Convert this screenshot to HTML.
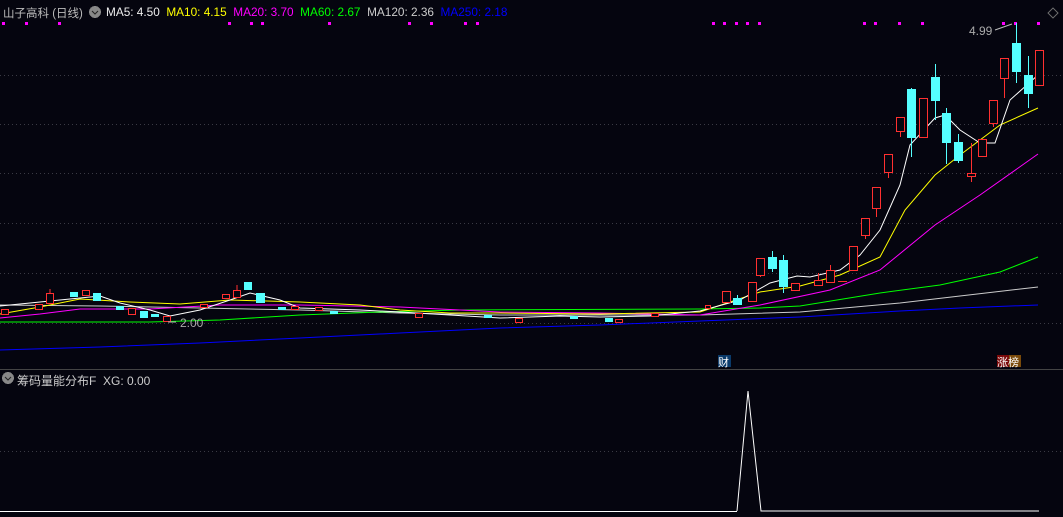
<!DOCTYPE html>
<html><head><meta charset="utf-8"><style>
html,body{margin:0;padding:0;background:#05050f;width:1063px;height:517px;overflow:hidden}
.t{position:absolute;font-family:"Liberation Sans","Noto Sans CJK SC",sans-serif;font-size:12px;white-space:nowrap}
</style></head><body>
<svg width="1063" height="517" style="position:absolute;left:0;top:0" shape-rendering="crispEdges">
<g stroke="#3a3a44" stroke-dasharray="1,3">
<line x1="0" y1="75.5" x2="1063" y2="75.5"/><line x1="0" y1="124.5" x2="1063" y2="124.5"/>
<line x1="0" y1="173.5" x2="1063" y2="173.5"/><line x1="0" y1="223.5" x2="1063" y2="223.5"/>
<line x1="0" y1="273.5" x2="1063" y2="273.5"/><line x1="0" y1="323.5" x2="1063" y2="323.5"/>
<line x1="0" y1="451.5" x2="1063" y2="451.5"/>
</g>
<line x1="0" y1="369.5" x2="1063" y2="369.5" stroke="#444"/>
<g fill="#f0f">
<rect x="2" y="22" width="3" height="3"/><rect x="25" y="22" width="3" height="3"/><rect x="58" y="22" width="3" height="3"/>
<rect x="228" y="22" width="3" height="3"/><rect x="250" y="22" width="3" height="3"/><rect x="261" y="22" width="3" height="3"/>
<rect x="328" y="22" width="3" height="3"/><rect x="408" y="22" width="3" height="3"/><rect x="430" y="22" width="3" height="3"/>
<rect x="464" y="22" width="3" height="3"/><rect x="476" y="22" width="3" height="3"/>
<rect x="712" y="22" width="3" height="3"/><rect x="723" y="22" width="3" height="3"/><rect x="735" y="22" width="3" height="3"/>
<rect x="746" y="22" width="3" height="3"/><rect x="758" y="22" width="3" height="3"/><rect x="863" y="22" width="3" height="3"/>
<rect x="874" y="22" width="3" height="3"/><rect x="898" y="22" width="3" height="3"/><rect x="921" y="22" width="3" height="3"/>
<rect x="1002" y="22" width="3" height="3"/><rect x="1014" y="22" width="3" height="3"/><rect x="1037" y="22" width="3" height="3"/>
</g>
<path d="M1053 8 l5 5 -5 5 -5 -5z" fill="none" stroke="#666"/>
<g fill="none" stroke-width="1" shape-rendering="auto">
<polyline stroke="#00f" points="0,350 100,347 200,343 300,338 400,333 500,328 600,325 700,321 800,317 900,311 960,308 1038,305"/>
<polyline stroke="#ccc" points="0,305 100,306 200,308 300,310 400,313 500,315 600,315 700,315 800,312 900,303 960,296 1038,287"/>
<polyline stroke="#0f0" points="0,322 150,322 220,320 300,315 380,312 460,310 700,309 760,308 800,306 880,293 940,285 1000,272 1038,257"/>
<polyline stroke="#f0f" points="0,318 40,314 80,309 150,309 220,305 300,305 400,307 500,312 600,313 700,315 760,305 830,290 880,270 935,225 980,195 1038,154"/>
<polyline stroke="#ff0" points="0,314 40,307 80,299 130,302 180,304 230,300 300,302 360,305 400,310 450,313 500,313 600,314 700,312 760,292 800,286 840,275 880,257 905,210 935,175 960,155 1000,125 1038,108"/>
<polyline stroke="#fff" points="0,306 40,302 70,299 100,296 120,303 150,310 170,316 200,310 230,300 250,293 280,300 300,308 360,310 400,312 450,315 500,318 560,316 600,317 650,316 700,311 740,300 770,283 797,276 810,277 840,270 860,255 880,230 900,185 910,145 935,118 945,115 960,130 980,143 995,143 1010,100 1038,75"/>
</g>
<g stroke="#ff3030" fill="#05050f">
<rect x="756.5" y="258.5" width="8" height="17"/><line x1="760.5" y1="275" x2="760.5" y2="277"/>
<rect x="791.5" y="283.5" width="8" height="7"/>
<rect x="814.5" y="280.5" width="8" height="5"/><line x1="818.5" y1="273" x2="818.5" y2="280"/>
<rect x="826.5" y="270.5" width="8" height="12"/><line x1="830.5" y1="265" x2="830.5" y2="270"/>
<line x1="838" y1="281.5" x2="847" y2="281.5"/>
<rect x="849.5" y="246.5" width="8" height="24"/>
<rect x="861.5" y="218.5" width="8" height="17"/><line x1="865.5" y1="235" x2="865.5" y2="239"/>
<rect x="872.5" y="187.5" width="8" height="21"/><line x1="876.5" y1="208" x2="876.5" y2="217"/>
<rect x="884.5" y="154.5" width="8" height="18"/><line x1="888.5" y1="172" x2="888.5" y2="178"/>
<rect x="896.5" y="117.5" width="8" height="14"/><line x1="900.5" y1="131" x2="900.5" y2="137"/>
<rect x="919.5" y="98.5" width="8" height="39"/>
<rect x="967.5" y="173.5" width="8" height="3"/><line x1="971.5" y1="143" x2="971.5" y2="173"/><line x1="971.5" y1="176" x2="971.5" y2="182"/>
<rect x="978.5" y="139.5" width="8" height="17"/>
<rect x="989.5" y="100.5" width="8" height="23"/><line x1="993.5" y1="123" x2="993.5" y2="127"/>
<rect x="1000.5" y="58.5" width="8" height="20"/><line x1="1004.5" y1="78" x2="1004.5" y2="98"/>
<rect x="1035.5" y="50.5" width="8" height="35"/>
<rect x="722.5" y="291.5" width="8" height="11"/>
<rect x="748.5" y="282.5" width="8" height="19"/>
<rect x="705.5" y="305.5" width="5" height="3"/>
<rect x="46.5" y="293.5" width="7" height="10"/><line x1="50" y1="289" x2="50" y2="293"/>
<rect x="35.5" y="304.5" width="7" height="5"/>
<rect x="82.5" y="290.5" width="7" height="5"/>
<rect x="233.5" y="290.5" width="7" height="7"/><line x1="237" y1="285" x2="237" y2="290"/>
<rect x="222.5" y="294.5" width="7" height="4"/>
<rect x="163.5" y="316.5" width="7" height="5"/>
<rect x="128.5" y="308.5" width="7" height="6"/>
<rect x="1.5" y="309.5" width="7" height="5"/>
<rect x="200.5" y="304.5" width="7" height="3"/>
<rect x="415.5" y="313.5" width="7" height="4"/><rect x="515.5" y="318.5" width="7" height="4"/>
<rect x="615.5" y="319.5" width="7" height="3"/><rect x="651.5" y="313.5" width="7" height="3"/>
<rect x="315.5" y="307.5" width="7" height="3"/><rect x="291.5" y="306.5" width="7" height="3"/>
</g>
<g fill="#55ffff" stroke="#55ffff">
<rect x="768.5" y="257.5" width="8" height="11"/><line x1="772.5" y1="251" x2="772.5" y2="272"/>
<rect x="779.5" y="260.5" width="8" height="26"/><line x1="783.5" y1="255" x2="783.5" y2="293"/>
<rect x="907.5" y="89.5" width="8" height="48"/><line x1="911.5" y1="88" x2="911.5" y2="157"/>
<rect x="931.5" y="77.5" width="8" height="23"/><line x1="935.5" y1="64" x2="935.5" y2="120"/>
<rect x="942.5" y="113.5" width="8" height="29"/><line x1="946.5" y1="108" x2="946.5" y2="164"/>
<rect x="954.5" y="142.5" width="8" height="18"/><line x1="958.5" y1="134" x2="958.5" y2="163"/>
<rect x="1012.5" y="43.5" width="8" height="28"/><line x1="1016.5" y1="23" x2="1016.5" y2="83"/>
<rect x="1024.5" y="75.5" width="8" height="18"/><line x1="1028.5" y1="56" x2="1028.5" y2="108"/>
<rect x="733.5" y="298.5" width="8" height="6"/><line x1="737.5" y1="295" x2="737.5" y2="298"/>
<rect x="244.5" y="282.5" width="7" height="7"/><rect x="256.5" y="293.5" width="8" height="9"/>
<rect x="93.5" y="293.5" width="7" height="7"/><rect x="70.5" y="292.5" width="7" height="4"/>
<rect x="140.5" y="311.5" width="7" height="6"/><rect x="116.5" y="306.5" width="7" height="3"/>
<rect x="151.5" y="314.5" width="7" height="2"/><rect x="278.5" y="307.5" width="7" height="2"/>
<rect x="605.5" y="318.5" width="7" height="3"/><rect x="570.5" y="316.5" width="7" height="2"/>
<rect x="484.5" y="315.5" width="7" height="2"/><rect x="330.5" y="311.5" width="7" height="2"/>
</g>
<path d="M995 30 L1012 24" stroke="#bbb" fill="none" shape-rendering="auto"/>
<path d="M176 322 L168 322" stroke="#bbb" fill="none"/>
<rect x="718" y="355" width="13" height="12" fill="#0a3a6a"/>
<rect x="997" y="355" width="12" height="12" fill="#7a0a0a"/><rect x="1009" y="355" width="12" height="12" fill="#7a4a0a"/>
<line x1="0" y1="511.5" x2="737" y2="511.5" stroke="#fff"/>
<polyline points="737,511 748,391 761,511 1039,511" stroke="#fff" fill="none" shape-rendering="auto"/>
<circle cx="95" cy="12" r="6" fill="#888"/><path d="M92 11 l3 3 3 -3" stroke="#222" fill="none" shape-rendering="auto"/>
<circle cx="8" cy="378" r="6" fill="#888"/><path d="M5 377 l3 3 3 -3" stroke="#222" fill="none" shape-rendering="auto"/>
</svg>
<div class="t" style="left:3px;top:5px;color:#bbb;font-size:11.5px">山子高科 (日线)</div>
<div class="t" style="left:106px;top:5px;font-size:11.8px"><span style="color:#eee">MA5: 4.50</span>&nbsp; <span style="color:#ff0">MA10: 4.15</span>&nbsp; <span style="color:#f0f">MA20: 3.70</span>&nbsp; <span style="color:#0f0">MA60: 2.67</span>&nbsp; <span style="color:#ccc">MA120: 2.36</span>&nbsp; <span style="color:#00f">MA250: 2.18</span></div>
<div class="t" style="left:969px;top:24px;color:#aaa">4.99</div>
<div class="t" style="left:180px;top:316px;color:#aaa">2.00</div>
<div class="t" style="left:718px;top:354px;color:#fff;font-size:11px">财</div>
<div class="t" style="left:997px;top:354px;color:#fff;font-size:11px">涨榜</div>
<div class="t" style="left:17px;top:372px;color:#ccc">筹码量能分布F&nbsp; XG: 0.00</div>
</body></html>
